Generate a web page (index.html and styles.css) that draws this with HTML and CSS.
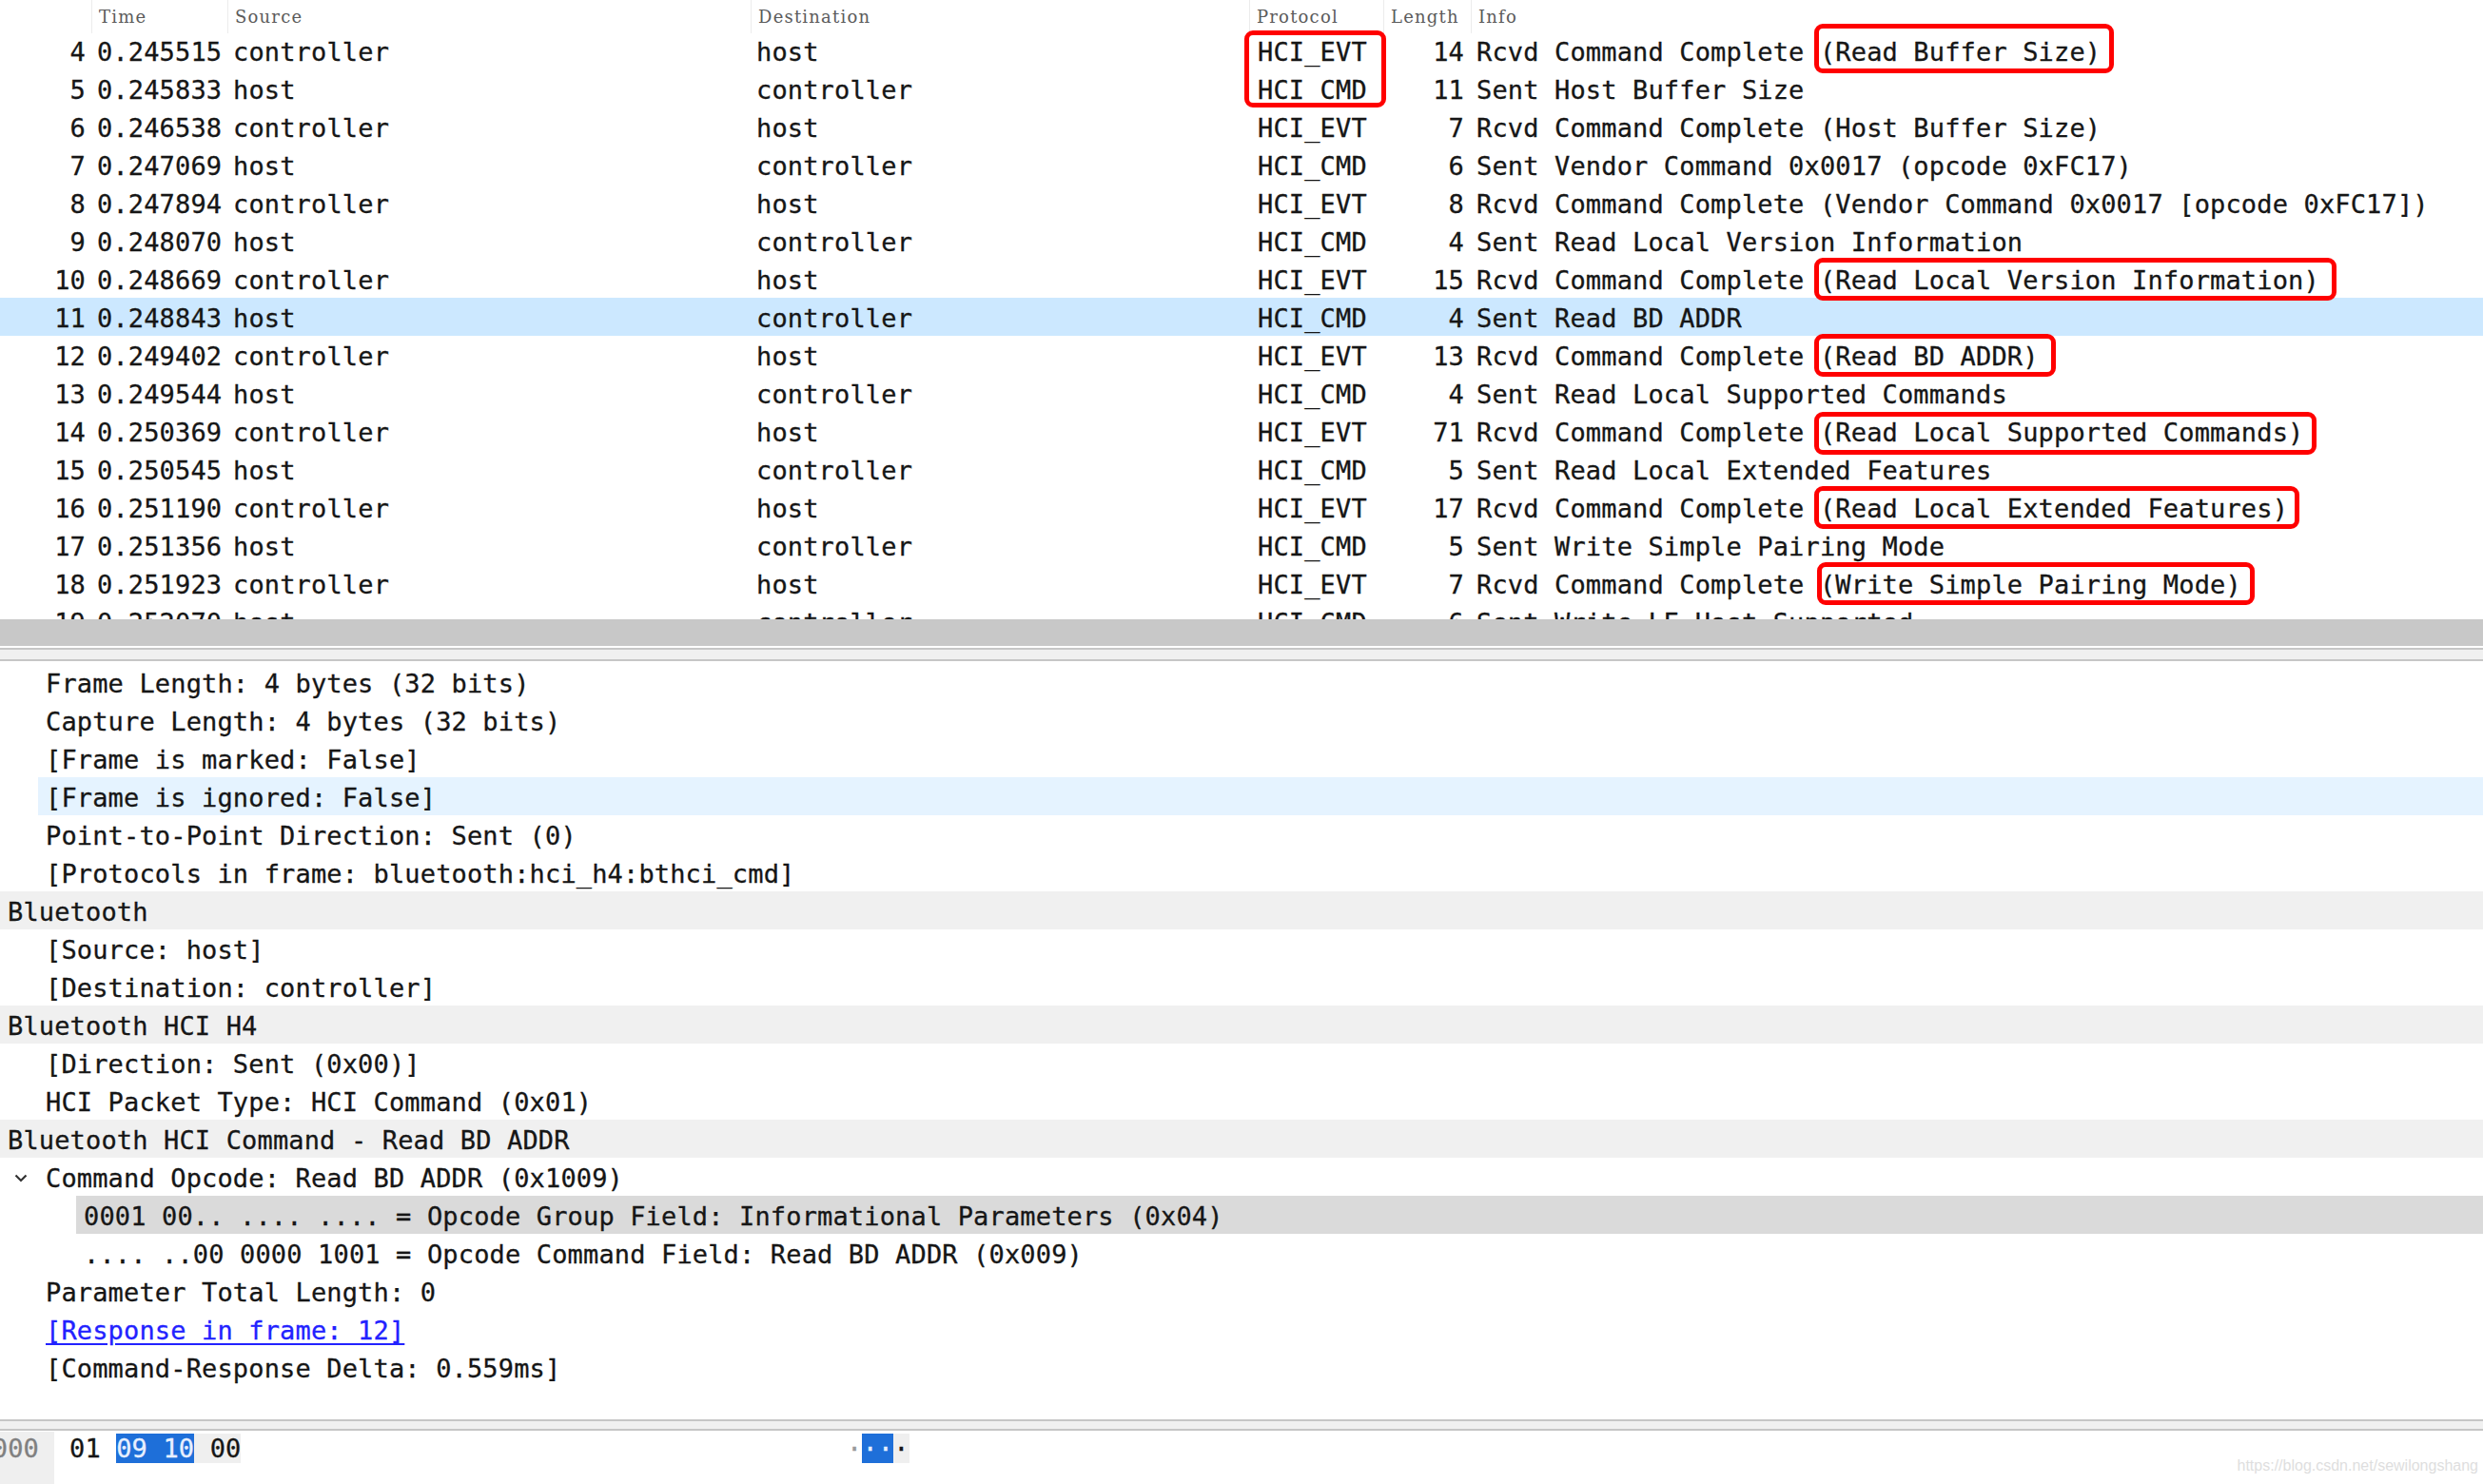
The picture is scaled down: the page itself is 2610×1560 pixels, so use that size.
FILE: index.html
```html
<!DOCTYPE html>
<html>
<head>
<meta charset="utf-8">
<title>Wireshark - Bluetooth HCI</title>
<link rel="stylesheet" href="styles.css">
</head>
<body>
<div class="app">
  <div class="plist">
    <div class="phead">
      <span class="hc hc-no"></span><span class="hc">Time</span><span class="hc">Source</span><span class="hc">Destination</span><span class="hc">Protocol</span><span class="hc">Length</span><span class="hc">Info</span>
    </div>
    <div class="prow"><span class="c-no">4</span><span class="c">0.245515</span><span class="c">controller</span><span class="c">host</span><span class="c proto proto-box">HCI_EVT</span><span class="c-len">14</span><span class="c">Rcvd Command Complete <span class="mark mark-first">(Read Buffer Size)</span></span></div>
    <div class="prow"><span class="c-no">5</span><span class="c">0.245833</span><span class="c">host</span><span class="c">controller</span><span class="c proto">HCI_CMD</span><span class="c-len">11</span><span class="c">Sent Host Buffer Size</span></div>
    <div class="prow"><span class="c-no">6</span><span class="c">0.246538</span><span class="c">controller</span><span class="c">host</span><span class="c proto">HCI_EVT</span><span class="c-len">7</span><span class="c">Rcvd Command Complete (Host Buffer Size)</span></div>
    <div class="prow"><span class="c-no">7</span><span class="c">0.247069</span><span class="c">host</span><span class="c">controller</span><span class="c proto">HCI_CMD</span><span class="c-len">6</span><span class="c">Sent Vendor Command 0x0017 (opcode 0xFC17)</span></div>
    <div class="prow"><span class="c-no">8</span><span class="c">0.247894</span><span class="c">controller</span><span class="c">host</span><span class="c proto">HCI_EVT</span><span class="c-len">8</span><span class="c">Rcvd Command Complete (Vendor Command 0x0017 [opcode 0xFC17])</span></div>
    <div class="prow"><span class="c-no">9</span><span class="c">0.248070</span><span class="c">host</span><span class="c">controller</span><span class="c proto">HCI_CMD</span><span class="c-len">4</span><span class="c">Sent Read Local Version Information</span></div>
    <div class="prow"><span class="c-no">10</span><span class="c">0.248669</span><span class="c">controller</span><span class="c">host</span><span class="c proto">HCI_EVT</span><span class="c-len">15</span><span class="c">Rcvd Command Complete <span class="mark mark-wide">(Read Local Version Information)</span></span></div>
    <div class="prow selected"><span class="c-no">11</span><span class="c">0.248843</span><span class="c">host</span><span class="c">controller</span><span class="c proto">HCI_CMD</span><span class="c-len">4</span><span class="c">Sent Read BD ADDR</span></div>
    <div class="prow"><span class="c-no">12</span><span class="c">0.249402</span><span class="c">controller</span><span class="c">host</span><span class="c proto">HCI_EVT</span><span class="c-len">13</span><span class="c">Rcvd Command Complete <span class="mark mark-wide">(Read BD ADDR)</span></span></div>
    <div class="prow"><span class="c-no">13</span><span class="c">0.249544</span><span class="c">host</span><span class="c">controller</span><span class="c proto">HCI_CMD</span><span class="c-len">4</span><span class="c">Sent Read Local Supported Commands</span></div>
    <div class="prow"><span class="c-no">14</span><span class="c">0.250369</span><span class="c">controller</span><span class="c">host</span><span class="c proto">HCI_EVT</span><span class="c-len">71</span><span class="c">Rcvd Command Complete <span class="mark mark-low">(Read Local Supported Commands)</span></span></div>
    <div class="prow"><span class="c-no">15</span><span class="c">0.250545</span><span class="c">host</span><span class="c">controller</span><span class="c proto">HCI_CMD</span><span class="c-len">5</span><span class="c">Sent Read Local Extended Features</span></div>
    <div class="prow"><span class="c-no">16</span><span class="c">0.251190</span><span class="c">controller</span><span class="c">host</span><span class="c proto">HCI_EVT</span><span class="c-len">17</span><span class="c">Rcvd Command Complete <span class="mark">(Read Local Extended Features)</span></span></div>
    <div class="prow"><span class="c-no">17</span><span class="c">0.251356</span><span class="c">host</span><span class="c">controller</span><span class="c proto">HCI_CMD</span><span class="c-len">5</span><span class="c">Sent Write Simple Pairing Mode</span></div>
    <div class="prow"><span class="c-no">18</span><span class="c">0.251923</span><span class="c">controller</span><span class="c">host</span><span class="c proto">HCI_EVT</span><span class="c-len">7</span><span class="c">Rcvd Command Complete <span class="mark mark-tight">(Write Simple Pairing Mode)</span></span></div>
    <div class="prow"><span class="c-no">19</span><span class="c">0.252070</span><span class="c">host</span><span class="c">controller</span><span class="c proto">HCI_CMD</span><span class="c-len">6</span><span class="c">Sent Write LE Host Supported</span></div>
  </div>

  <div class="hbar"></div>
  <div class="split"></div>

  <div class="details">
    <div class="drow l1">Frame Length: 4 bytes (32 bits)</div>
    <div class="drow l1">Capture Length: 4 bytes (32 bits)</div>
    <div class="drow l1">[Frame is marked: False]</div>
    <div class="drow l1 hover">[Frame is ignored: False]</div>
    <div class="drow l1">Point-to-Point Direction: Sent (0)</div>
    <div class="drow l1">[Protocols in frame: bluetooth:hci_h4:bthci_cmd]</div>
    <div class="drow hdr">Bluetooth</div>
    <div class="drow l1">[Source: host]</div>
    <div class="drow l1">[Destination: controller]</div>
    <div class="drow hdr">Bluetooth HCI H4</div>
    <div class="drow l1">[Direction: Sent (0x00)]</div>
    <div class="drow l1">HCI Packet Type: HCI Command (0x01)</div>
    <div class="drow hdr">Bluetooth HCI Command - Read BD ADDR</div>
    <div class="drow l1 expanded"><svg class="chev" width="14" height="9" viewBox="0 0 14 9"><polyline points="1.5,1.5 7,7 12.5,1.5" fill="none" stroke="#333" stroke-width="2.2"/></svg>Command Opcode: Read BD ADDR (0x1009)</div>
    <div class="drow l2 sel">0001 00.. .... .... = Opcode Group Field: Informational Parameters (0x04)</div>
    <div class="drow l2">.... ..00 0000 1001 = Opcode Command Field: Read BD ADDR (0x009)</div>
    <div class="drow l1">Parameter Total Length: 0</div>
    <div class="drow l1"><span class="link">[Response in frame: 12]</span></div>
    <div class="drow l1">[Command-Response Delta: 0.559ms]</div>
  </div>

  <div class="split split-b"></div>

  <div class="hex">
    <div class="hex-off"><span>0000</span></div>
    <div class="hex-bytes"><span>01 </span><span class="hsel">09 10</span><span class="hhov"> 00</span></div>
    <div class="hex-ascii"><span class="adim">·</span><span class="hsel">··</span><span class="hhov">·</span></div>
  </div>

  <div class="watermark">https://blog.csdn.net/sewilongshang</div>
</div>
</body>
</html>
```

FILE: styles.css
```css
html, body {
  margin: 0;
  padding: 0;
  background: #ffffff;
}

body {
  width: 2610px;
  height: 1560px;
  overflow: hidden;
}

.app {
  position: relative;
  display: flex;
  flex-direction: column;
  width: 2610px;
  height: 1560px;
  font-family: "DejaVu Sans Mono", "Liberation Mono", monospace;
  font-size: 27px;
  letter-spacing: 0.15px;
  color: #161616;
  -webkit-text-stroke: 0.3px currentColor;
}

/* ---------- packet list ---------- */
.plist {
  height: 651px;
  flex: none;
  overflow: hidden;
}

.phead,
.prow {
  display: grid;
  grid-template-columns: 96px 143px 550px 524px 141px 92px 1fr;
}

.phead {
  height: 33px;
}

.hc {
  font-family: "DejaVu Serif", "Liberation Serif", serif;
  font-size: 18px;
  letter-spacing: 1.2px;
  line-height: 35px;
  color: #5b5b5b;
  -webkit-text-stroke: 0;
  padding-left: 7px;
  border-left: 1px solid #ececec;
  white-space: pre;
}

.hc-no {
  border-left: none;
}

.prow {
  box-sizing: border-box;
  height: 40px;
  padding-top: 3px;
  line-height: 37px;
  white-space: pre;
}

.prow.selected {
  background: #cce8ff;
}

.c {
  padding-left: 6px;
}

.c-no {
  text-align: right;
  padding-right: 6px;
}

.c-len {
  text-align: right;
  padding-right: 7px;
}

.proto {
  padding-left: 9px;
}

.proto-box {
  position: relative;
}

.proto-box::after {
  content: "";
  position: absolute;
  left: -5px;
  right: -3px;
  top: -4px;
  height: 81px;
  box-sizing: border-box;
  border: 5px solid #ff0000;
  border-radius: 9px;
}

.mark {
  position: relative;
  display: inline-block;
  height: 37px;
}

.mark::after {
  content: "";
  position: absolute;
  left: -6px;
  right: -12px;
  top: -5px;
  bottom: -3px;
  border: 5px solid #ff0000;
  border-radius: 9px;
}

.mark-first::after {
  top: -11px;
  bottom: -4px;
  right: -14px;
}

.mark-wide::after {
  right: -18px;
}

.mark-low::after {
  top: -3px;
  bottom: -5px;
  right: -13px;
}

.mark-tight::after {
  left: -3px;
  right: -14px;
}

/* ---------- splitters ---------- */
.hbar {
  height: 28px;
  flex: none;
  background: #c8c8c8;
}

.split {
  flex: none;
  height: 10px;
  margin: 2px 0;
  background: #f0f0f0;
  border-top: 2px solid #c6c6c6;
  border-bottom: 2px solid #c6c6c6;
}

.split-b {
  height: 8px;
  margin: 2px 0 0;
}

/* ---------- details tree ---------- */
.details {
  height: 793px;
  flex: none;
  overflow: hidden;
}

.drow {
  position: relative;
  box-sizing: border-box;
  height: 40px;
  padding-top: 3px;
  line-height: 37px;
  padding-left: 8px;
  white-space: pre;
}

.l1 {
  margin-left: 40px;
}

.l2 {
  margin-left: 80px;
}

.hdr {
  background: #f0f0f0;
}

.hover {
  background: #e5f3ff;
}

.sel {
  background: #dadada;
}

.chev {
  position: absolute;
  left: -25px;
  top: 17px;
}

.link {
  color: #2222ff;
  text-decoration: underline;
  text-underline-offset: 4px;
}

/* ---------- hex pane ---------- */
.hex {
  flex: 1;
  display: flex;
  align-items: flex-start;
  padding-top: 1px;
}

.hex-off {
  align-self: stretch;
  width: 41px;
  padding-right: 16px;
  flex: none;
  display: flex;
  justify-content: flex-end;
  overflow: hidden;
  background: #efefef;
  color: #808080;
  line-height: 36px;
  white-space: pre;
}

.hex-bytes {
  flex: none;
  width: 817px;
  margin-left: 16px;
  line-height: 36px;
  white-space: pre;
}

.hex-ascii {
  flex: none;
  line-height: 36px;
  white-space: pre;
}

.hsel {
  background: #1e6fd9;
  color: #e8f0ff;
}

.hhov {
  background: #efefef;
}

.adim {
  color: #9a9a9a;
}

.watermark {
  position: absolute;
  right: 5px;
  bottom: 10px;
  font-family: "Liberation Sans", Arial, sans-serif;
  font-size: 16px;
  letter-spacing: 0;
  color: #dedede;
  -webkit-text-stroke: 0;
}
```
